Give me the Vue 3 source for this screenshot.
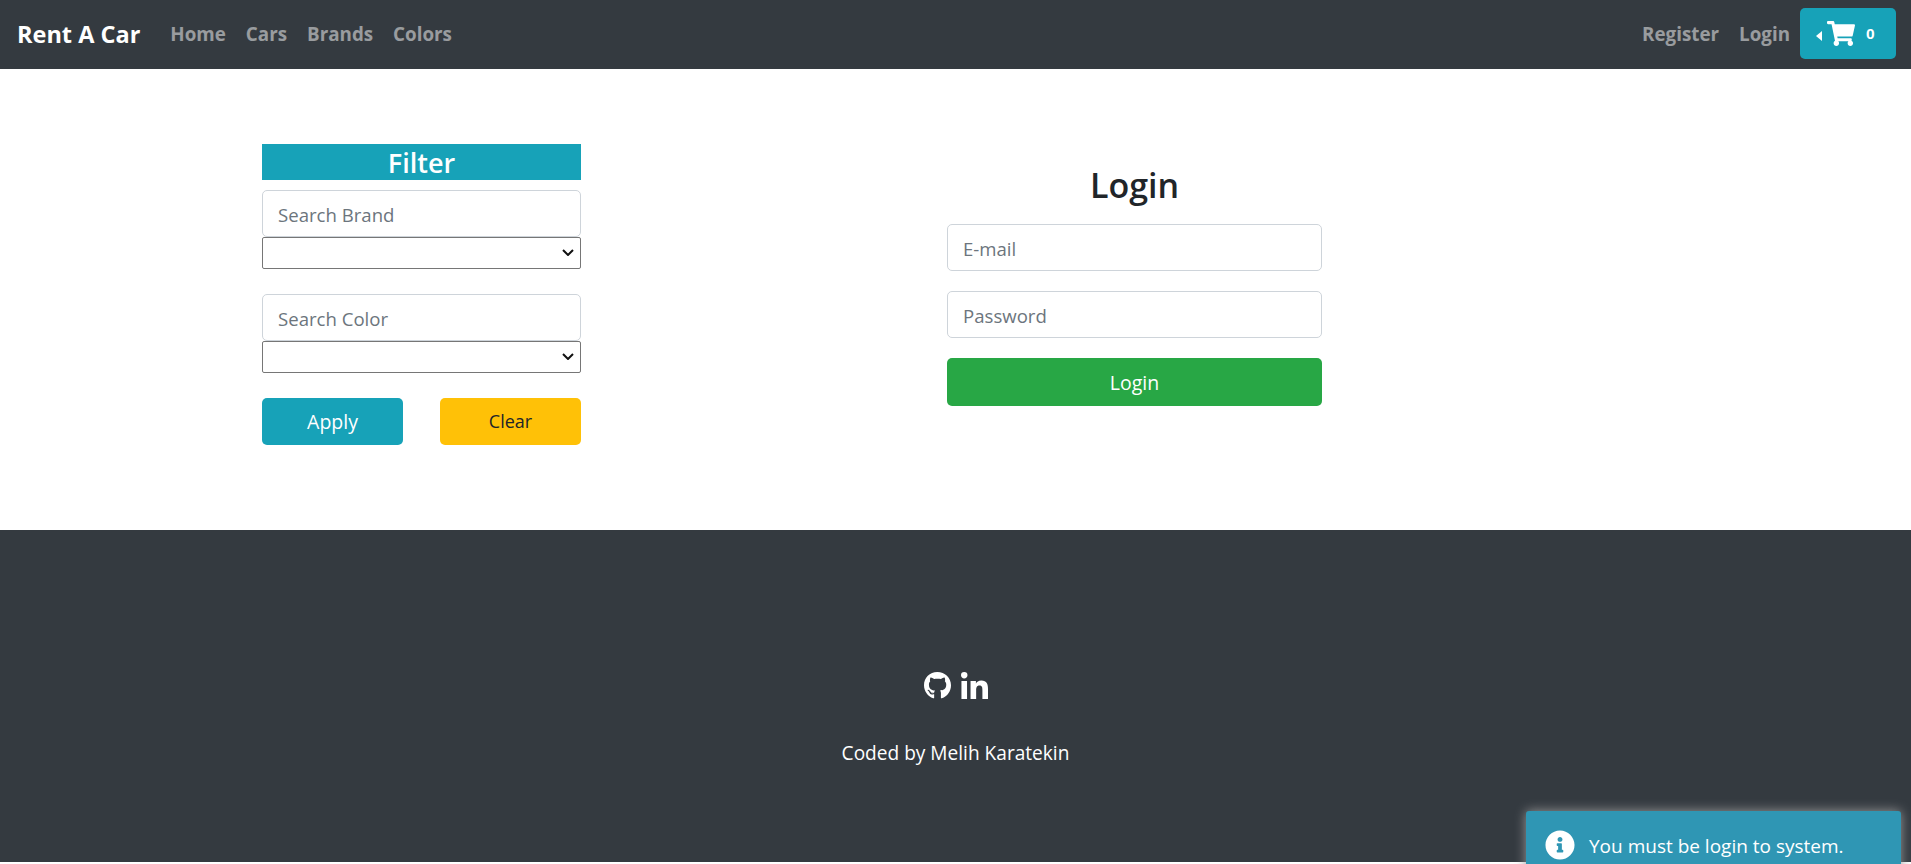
<script setup>
const navLinks = ['Home', 'Cars', 'Brands', 'Colors']
</script>

<template>
  <div class="page">
    <nav class="navbar">
      <a class="brand">Rent A Car</a>
      <a v-for="link in navLinks" :key="link" class="nav-link">{{ link }}</a>
      <span class="spacer"></span>
      <a class="nav-link">Register</a>
      <a class="nav-link">Login</a>
      <button class="cart-btn">
        <span class="caret"></span>
        <svg class="cart-icon" viewBox="0 0 576 512"><path fill="#fff" d="M528.12 301.319l47.273-208C578.806 78.301 567.391 64 551.99 64H159.208l-9.166-44.81C147.758 8.021 137.93 0 126.529 0H24C10.745 0 0 10.745 0 24v16c0 13.255 10.745 24 24 24h69.883l70.248 343.435C147.325 417.1 136 435.222 136 456c0 30.928 25.072 56 56 56s56-25.072 56-56c0-15.674-6.447-29.835-16.824-40h209.647C430.447 426.165 424 440.326 424 456c0 30.928 25.072 56 56 56s56-25.072 56-56c0-22.172-12.888-41.332-31.579-50.405l5.517-24.276c3.413-15.018-8.002-29.319-23.403-29.319H218.117l-6.545-32h293.145c11.206 0 20.92-7.754 23.403-18.681z"/></svg>
        <span class="cart-count">0</span>
      </button>
    </nav>

    <main class="content">
      <aside class="filter">
        <h3 class="filter-title">Filter</h3>
        <input class="field" placeholder="Search Brand" />
        <select class="picker"></select>
        <input class="field second" placeholder="Search Color" />
        <select class="picker"></select>
        <div class="filter-actions">
          <button class="btn apply">Apply</button>
          <button class="btn clear">Clear</button>
        </div>
      </aside>

      <form class="login" @submit.prevent>
        <h2 class="login-title">Login</h2>
        <input class="field" placeholder="E-mail" />
        <input class="field" placeholder="Password" />
        <button class="btn submit">Login</button>
      </form>
    </main>

    <footer class="footer">
      <div class="socials">
        <svg class="github" viewBox="0 8 496 496"><path fill="#fff" d="M165.9 397.4c0 2-2.3 3.6-5.2 3.6-3.3 0-5.6-1.6-5.6-3.6 0-2 2.3-3.6 5.2-3.6 3-.3 5.6 1.3 5.6 3.6zm-31.1-4.5c-.7 2 1.3 4.3 4.3 4.9 2.6 1 5.6 0 6.2-2s-1.3-4.3-4.3-5.3c-2.6-.7-5.5.3-6.2 2.4zm44.2-1.7c-2.9.7-4.9 2.6-4.6 4.9.3 2 2.9 3.3 5.9 2.6 2.9-.7 4.9-2.6 4.6-4.6-.3-1.9-3-3.2-5.9-2.9zM244.8 8C106.1 8 0 113.3 0 252c0 110.9 69.8 205.8 169.5 239.2 12.8 2.3 17.3-5.6 17.3-12.1 0-6.2-.3-40.4-.3-61.4 0 0-70 15-84.7-29.8 0 0-11.4-29.1-27.8-36.6 0 0-22.9-15.7 1.6-15.4 0 0 24.9 2 38.6 25.8 21.9 38.6 58.6 27.5 72.9 20.9 2.3-16 8.8-27.1 16-33.7-55.9-6.2-112.3-14.3-112.3-110.5 0-27.5 7.6-41.3 23.6-58.9-2.6-6.5-11.1-33.3 2.6-67.9 20.9-6.5 69 27 69 27 20-5.6 41.5-8.5 62.8-8.5s42.8 2.9 62.8 8.5c0 0 48.1-33.6 69-27 13.7 34.7 5.2 61.4 2.6 67.9 16 17.7 25.8 31.5 25.8 58.9 0 96.5-58.9 104.2-114.8 110.5 9.2 7.9 17 22.9 17 46.4 0 33.7-.3 75.4-.3 83.6 0 6.5 4.6 14.4 17.3 12.1C428.2 457.8 496 362.9 496 252 496 113.3 383.5 8 244.8 8z"/></svg>
        <svg class="linkedin" viewBox="0 0 448 448"><path fill="#fff" d="M100.28 448H7.4V148.9h92.88zM53.79 108.1C24.09 108.1 0 83.5 0 53.8a53.79 53.79 0 0 1 107.58 0c0 29.7-24.1 54.3-53.79 54.3zM447.9 448h-92.68V302.4c0-34.7-.7-79.2-48.29-79.2-48.29 0-55.69 37.7-55.69 76.7V448h-92.78V148.9h89.08v40.8h1.3c12.4-23.5 42.69-48.3 87.88-48.3 94 0 111.28 61.9 111.28 142.3V448z"/></svg>
      </div>
      <p class="credit">Coded by Melih Karatekin</p>
    </footer>

    <div class="toast">
      <svg class="toast-icon" viewBox="0 0 512 512"><path fill="#fff" d="M256 8C119.043 8 8 119.083 8 256c0 136.997 111.043 248 248 248s248-111.003 248-248C504 119.083 392.957 8 256 8zm0 110c23.196 0 42 18.804 42 42s-18.804 42-42 42-42-18.804-42-42 18.804-42 42-42zm56 254c0 6.627-5.373 12-12 12h-88c-6.627 0-12-5.373-12-12v-24c0-6.627 5.373-12 12-12h12v-64h-12c-6.627 0-12-5.373-12-12v-24c0-6.627 5.373-12 12-12h64c6.627 0 12 5.373 12 12v100h12c6.627 0 12 5.373 12 12v24z"/></svg>
      <span>You must be login to system.</span>
    </div>
  </div>
</template>

<style>
html, body {
  margin: 0;
  background: #fff;
  overflow: hidden;
}
</style>

<style scoped>
.page {
  height: 864px;
  overflow: hidden;
  font-family: "Open Sans", "Noto Sans", sans-serif;
  font-size: 18.6px;
  color: #212529;
}
.navbar {
  display: flex;
  align-items: center;
  height: 69px;
  box-sizing: border-box;
  padding: 0 15px 2px 17px;
  background: #343a40;
}
.brand {
  color: #fff;
  font-size: 23.5px;
  font-weight: 700;
  margin-right: 30px;
}
.nav-link {
  color: rgba(255, 255, 255, 0.5);
  font-size: 18.8px;
  font-weight: 700;
  margin-right: 20px;
}
.spacer { flex: 1; }
.navbar .nav-link:nth-last-child(2) { margin-right: 10px; }
.cart-btn {
  display: flex;
  align-items: center;
  width: 96px;
  height: 51px;
  padding: 0 0 0 16px;
  border: none;
  border-radius: 5px;
  background: #17a2b8;
  color: #fff;
}
.caret {
  width: 0;
  height: 0;
  border-top: 5.5px solid transparent;
  border-bottom: 5.5px solid transparent;
  border-right: 6px solid #fff;
  margin-top: 4px;
  margin-right: 5px;
}
.cart-icon {
  width: 28px;
  height: 25px;
}
.cart-count {
  margin-left: 11px;
  font-family: inherit;
  font-size: 15.5px;
  font-weight: 700;
}
.content {
  display: grid;
  grid-template-columns: 319px 375px;
  column-gap: 366px;
  align-items: start;
  height: 461px;
  box-sizing: border-box;
  padding: 75px 0 0 262px;
}
.filter {
  display: flex;
  flex-direction: column;
}
.filter-title {
  margin: 0 0 10px;
  height: 36px;
  line-height: 38px;
  background: #17a2b8;
  color: #fff;
  font-size: 27px;
  font-weight: 600;
  text-align: center;
}
.field {
  width: 100%;
  height: 47px;
  box-sizing: border-box;
  padding: 2px 15px 0;
  border: 1px solid #ced4da;
  border-radius: 5px;
  background: #fff;
  color: #495057;
  font: inherit;
  outline: none;
}
.field::placeholder { color: #6c757d; opacity: 1; }
.field.second { margin-top: 25.5px; }
.picker {
  width: 100%;
  height: 31.5px;
  border: 1px solid #767676;
  border-radius: 2px;
  appearance: none;
  background: #fff url("data:image/svg+xml,%3Csvg xmlns='http://www.w3.org/2000/svg' viewBox='0 0 12 7'%3E%3Cpath d='M1 1l5 5 5-5' fill='none' stroke='%23111' stroke-width='2'/%3E%3C/svg%3E") no-repeat right 6px center / 12px 7px;
}
.filter-actions {
  display: flex;
  justify-content: space-between;
  margin-top: 25px;
}
.btn {
  height: 47px;
  border: none;
  border-radius: 5px;
  font: inherit;
}
.apply { width: 141px; background: #17a2b8; color: #fff; font-size: 19.5px; }
.clear { width: 141px; background: #ffc107; color: #212529; font-size: 18px; }
.login {
  display: flex;
  flex-direction: column;
  padding-top: 17px;
}
.login-title {
  margin: 0 0 15px;
  font-size: 34px;
  font-weight: 600;
  line-height: 48px;
  text-align: center;
}
.login .field { margin-bottom: 20px; }
.submit { background: #28a745; color: #fff; height: 48px; font-size: 19.5px; }
.footer {
  display: flex;
  flex-direction: column;
  align-items: center;
  height: 332px;
  box-sizing: border-box;
  padding-top: 142px;
  background: #343a40;
  color: #fff;
}
.socials {
  display: flex;
  align-items: center;
  gap: 10px;
  height: 27px;
}
.github { width: 27px; height: 27px; }
.linkedin { width: 27px; height: 27px; }
.credit {
  margin: 41px 0 0;
  font-size: 19.1px;
}
.toast {
  position: absolute;
  top: 811px;
  left: 1526px;
  width: 375px;
  height: 80px;
  box-sizing: border-box;
  padding: 19px 20px 0 19px;
  display: flex;
  align-items: flex-start;
  gap: 14px;
  border-radius: 3px;
  background: #2f96b4;
  color: #fff;
  box-shadow: 0 0 12px #999;
}
.toast-icon { width: 30px; height: 30px; }
.toast span { line-height: 32px; font-size: 19px; }
</style>
